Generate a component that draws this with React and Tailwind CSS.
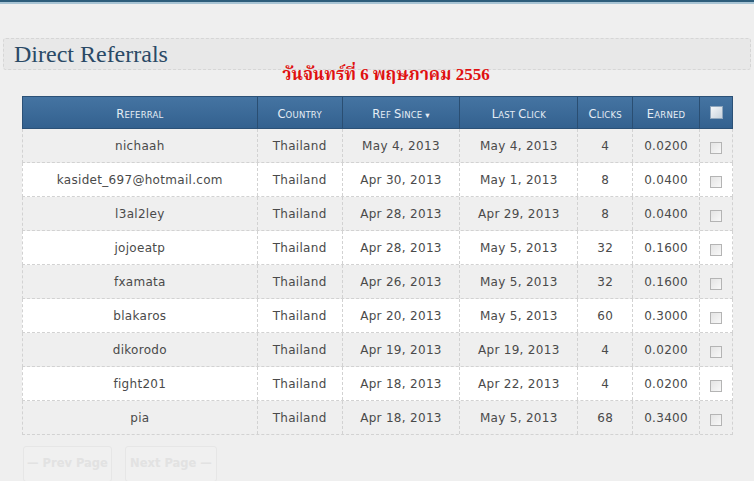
import React from "react";

const rows = [
  ["nichaah", "Thailand", "May 4, 2013", "May 4, 2013", "4", "0.0200"],
  ["kasidet_697@hotmail.com", "Thailand", "Apr 30, 2013", "May 1, 2013", "8", "0.0400"],
  ["l3al2ley", "Thailand", "Apr 28, 2013", "Apr 29, 2013", "8", "0.0400"],
  ["jojoeatp", "Thailand", "Apr 28, 2013", "May 5, 2013", "32", "0.1600"],
  ["fxamata", "Thailand", "Apr 26, 2013", "May 5, 2013", "32", "0.1600"],
  ["blakaros", "Thailand", "Apr 20, 2013", "May 5, 2013", "60", "0.3000"],
  ["dikorodo", "Thailand", "Apr 19, 2013", "Apr 19, 2013", "4", "0.0200"],
  ["fight201", "Thailand", "Apr 18, 2013", "Apr 22, 2013", "4", "0.0200"],
  ["pia", "Thailand", "Apr 18, 2013", "May 5, 2013", "68", "0.3400"],
];

const widths = ["w-[235px]", "w-[85px]", "w-[118px]", "w-[118px]", "w-[55px]", "w-[67px]", "w-[32px]"];

function Head({ big, small, extra }) {
  return (
    <span>
      <span className="text-[11.5px]">{big}</span>
      <span className="text-[8.5px]">{small}</span>
      {extra}
    </span>
  );
}

export default function App() {
  return (
    <div className="w-[754px] h-[481px] bg-[#efefef] overflow-hidden relative" style={{ fontFamily: "'DejaVu Sans', sans-serif" }}>
      <div className="h-[2px] bg-[#2d5d7b]" />
      <div className="h-[2px] bg-[#a8c4d4]" />
      <div className="pt-[34px] px-[3px]">
        <div className="h-[32px] border border-dashed border-[#d6d6d6] bg-[#e8e8e8] rounded-[3px] pl-[10px] flex items-center">
          <span className="text-[24px] text-[#2b4a66] leading-none" style={{ fontFamily: "'Liberation Serif', 'DejaVu Serif', serif" }}>Direct Referrals</span>
        </div>
      </div>
      <div className="flex justify-center pl-[18px] h-[30px] items-start -mt-[4px]">
        <span className="text-[#e01010] font-bold text-[17px] leading-none" style={{ fontFamily: "'Liberation Serif', 'Noto Serif Thai', 'DejaVu Serif', serif" }}>
          วันจันทร์ที่ 6 พฤษภาคม 2556
        </span>
      </div>
      <div className="ml-[22px] w-[711px]">
        <div className="flex h-[33px] bg-gradient-to-b from-[#4574a2] to-[#33618f] border border-[#2b5177] text-[#e6edf5]">
          {[
            <Head big="R" small="EFERRAL" />,
            <Head big="C" small="OUNTRY" />,
            <Head big="R" small="EF " extra={<><span className="text-[11.5px]">S</span><span className="text-[8.5px]">INCE ▾</span></>} />,
            <Head big="L" small="AST " extra={<><span className="text-[11.5px]">C</span><span className="text-[8.5px]">LICK</span></>} />,
            <Head big="C" small="LICKS" />,
            <Head big="E" small="ARNED" />,
            <span className="w-[13px] h-[13px] border border-[#8fa6bd] bg-gradient-to-br from-[#f4f6f8] to-[#c9d3dd] block" />,
          ].map((c, i) => (
            <div key={i} className={`${widths[i]} ${i < 6 ? "border-r border-[#2a4e72]" : ""} flex items-center justify-center tracking-[0.2px]`}>
              {c}
            </div>
          ))}
        </div>
        {rows.map((r, ri) => (
          <div key={ri} className={`flex h-[34px] border-b border-l border-r border-dashed border-[#d2d2d2] ${ri % 2 === 0 ? "bg-[#efefef]" : "bg-white"}`}>
            {r.map((c, ci) => (
              <div key={ci} className={`${widths[ci]} border-r border-dashed border-[#d2d2d2] flex items-center justify-center text-[12px] text-[#4a4a4a] tracking-[0.3px]`}>
                {c}
              </div>
            ))}
            <div className="w-[32px] flex items-center justify-center pt-[4px]">
              <span className="w-[12px] h-[12px] border border-[#b4b4b4] bg-gradient-to-br from-[#e4e4e4] to-[#f8f8f8] block" />
            </div>
          </div>
        ))}
        <div className="flex gap-[13px] mt-[11px] ml-[1px]">
          <div className="w-[89px] h-[36px] border border-[#e6e6e6] rounded-[3px] bg-[#f0f0f0] flex items-center justify-center text-[11.5px] font-bold text-[#e2e2e2]">— Prev Page</div>
          <div className="w-[92px] h-[36px] border border-[#e6e6e6] rounded-[3px] bg-[#f0f0f0] flex items-center justify-center text-[11.5px] font-bold text-[#e2e2e2]">Next Page —</div>
        </div>
      </div>
    </div>
  );
}
